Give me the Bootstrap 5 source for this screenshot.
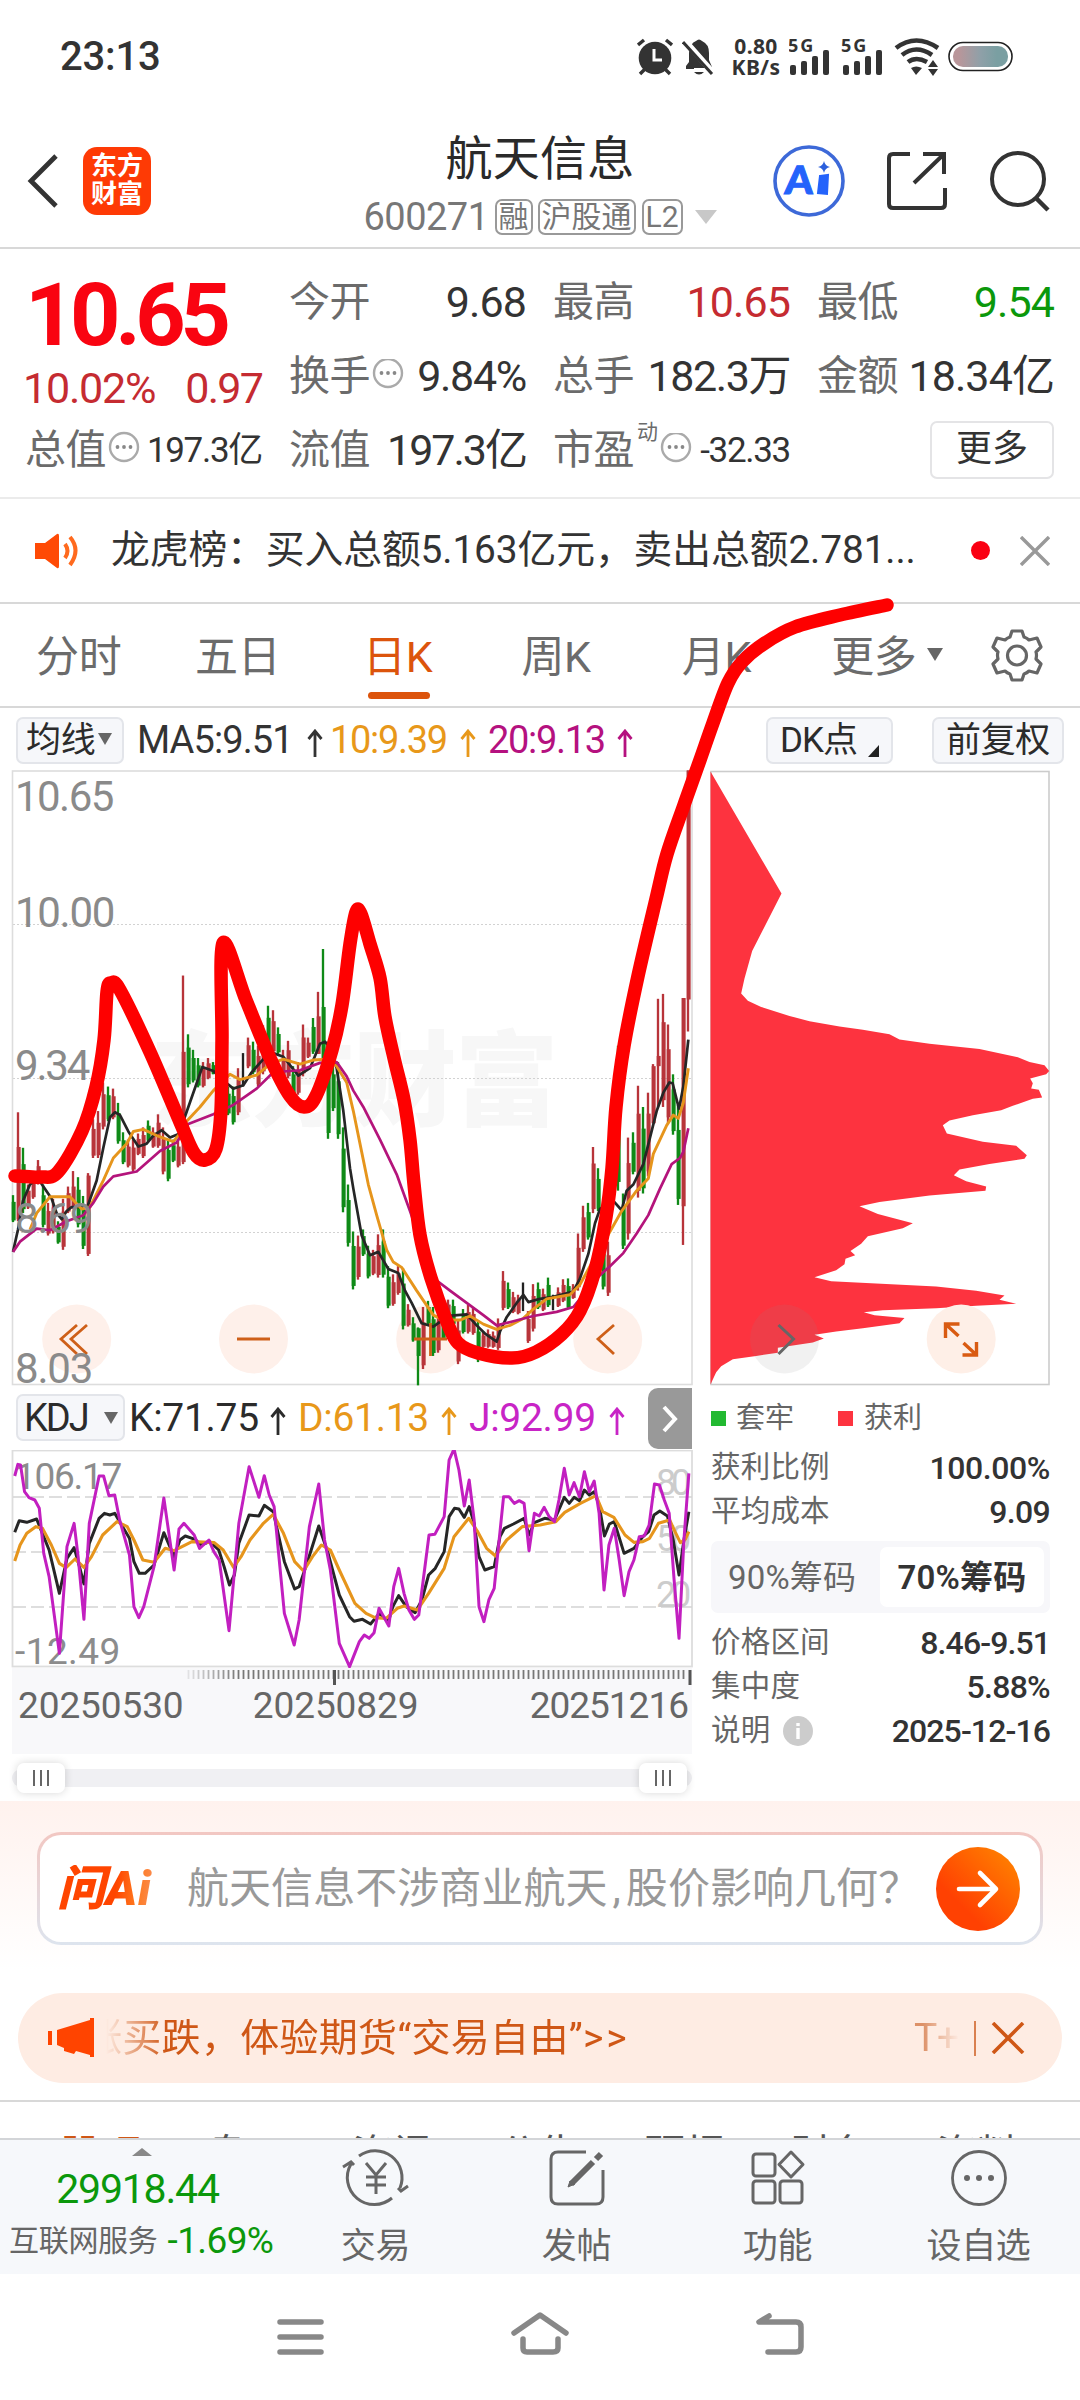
<!DOCTYPE html>
<html lang="zh-CN">
<head>
<meta charset="utf-8">
<meta name="viewport" content="width=device-width, initial-scale=1">
<title>航天信息 600271</title>
<link href="https://cdn.jsdelivr.net/npm/bootstrap@5.3.0/dist/css/bootstrap.min.css" rel="stylesheet">
<style>
  body { width:1080px; height:2400px; margin:0; overflow:hidden; background:#fff; color:#333; font-family:Roboto,"Noto Sans CJK SC",sans-serif; font-size:37px; line-height:1; letter-spacing:-.3px; position:relative; }
  svg { display:block; flex:none; }
  .nw { white-space:nowrap; }
  .statusbar { height:114px; padding:0 66px 0 60px; }
  .clock { font-size:40px; font-weight:500; letter-spacing:-.2px; }
  .netspeed { width:58px; margin-left:11px; font-family:"Noto Sans",sans-serif; font-size:21px; font-weight:700; line-height:21px; text-align:center; letter-spacing:.4px; }
  .appbar { height:135px; border-bottom:2px solid #d8d8d8; }
  .brand-tile { width:68px; height:68px; border-radius:14px; background:#fe3a05; color:#fff; font-size:26px; line-height:28px; font-weight:600; padding-top:5px; text-align:center; margin-left:24px; letter-spacing:0; }
  .stock-name { font-size:47px; color:#2a2a2a; height:63px; letter-spacing:.2px; }
  .stock-code { font-size:38px; color:#777; letter-spacing:-.5px; }
  .tagbox { border:2px solid #999; border-radius:7px; font-size:30px; height:36px; line-height:32px; padding:0 2px; margin-left:6px; color:#777; letter-spacing:0; }
  .quote { height:250px; padding:16px 25px 0 25px; border-bottom:2px solid #ebebeb; display:grid; grid-template-columns:repeat(4,237px); column-gap:27px; grid-template-rows:repeat(3,74px); }
  .lab { color:#6b6b6b; font-size:41px; letter-spacing:-.5px; }
  .num { font-size:43px; letter-spacing:-.9px; }
  .num-sm { font-size:35px; letter-spacing:-1.3px; }
  .bigprice { font-size:88px; font-weight:700; color:#f90411; letter-spacing:-5.4px; }
  .up { color:#c52b31; } .down { color:#0b980b; }
  .more-btn { width:124px; height:58px; border:2px solid #e4e4e6; border-radius:7px; font-size:36px; background:#fff; color:#333; padding:0 0 3px; }
  .notice { height:105px; border-bottom:2px solid #d8d8d8; padding:0 30px 0 34px; }
  .notice-text { font-size:38.8px; margin-left:31px; width:808px; letter-spacing:-.1px; }
  .periods { height:104px; border-bottom:2px solid #d8d8d8; color:#6b6b6b; font-size:43px; }
  .periods .pd { height:100%; position:relative; padding-top:5px; }
  .pd.on { color:#dc540c; }
  .pd.on::after { content:""; position:absolute; left:5px; right:2px; bottom:7px; height:7px; border-radius:4px; background:#dc540c; }
  .marow { height:62px; padding:2px 16px 0; font-size:38px; }
  .chip { height:47px; border:2px solid #e3e5ea; border-radius:7px; background:#f6f7fa; color:#2b2b2b; font-size:35px; white-space:nowrap; }
  .tri { width:0; height:0; border:7px solid transparent; border-top:12px solid #666; border-bottom:0; display:inline-block; }
  .arw { display:inline-block; margin-left:6px; }
  .orange { color:#e8981a; } .plum { color:#b5117f; } .pink { color:#c824c6; }
  .leftcol { width:700px; } .rightcol { width:380px; padding:0 30px 0 11px; }
  .kdjrow { height:63px; padding-left:16px; position:relative; font-size:39px; }
  .handle-open { width:44px; height:61px; background:#999; border-radius:10px 0 0 10px; margin-left:auto; margin-right:8px; }
  .dates { margin-left:12px; width:680px; height:86px; background:#f8f8fa; color:#666; }
  .dates .dlab { font-size:37px; letter-spacing:-.1px; padding:0 4px 0 6px; }
  .slider { height:18px; width:680px; margin:15px 0 0 12px; border-radius:9px; background:#f0f0f3; padding:0 5px; }
  .grip { width:48px; height:30px; border-radius:7px; background:#fff; box-shadow:0 0 8px rgba(0,0,0,.16); gap:5px; }
  .grip i { width:2px; height:16px; background:#666; }
  .legend { height:64px; margin-left:0; font-size:29px; color:#666; letter-spacing:0; }
  .sq { width:15px; height:15px; display:inline-block; }
  .kv { height:44px; font-size:29.5px; color:#666; letter-spacing:.2px; }
  .kv b { font-size:32px; font-weight:500; color:#333; letter-spacing:-.7px; }
  .seg { height:72px; margin:7px 0 8px; border-radius:7px; background:#f7f7fa; font-size:33px; color:#666; padding:6px; letter-spacing:.2px; }
  .seg .on { background:#fff; border-radius:7px; width:164px; height:60px; color:#333; font-weight:600; letter-spacing:.2px; }
  .asksec { height:192px; padding:31px 37px 0; background:linear-gradient(#fff2ee,#fff 88%); }
  .askbox { height:113px; border:3px solid transparent; border-radius:24px; background:linear-gradient(#fff,#fff) padding-box,linear-gradient(#f2c7c2,#dde4ee) border-box; padding:0 20px 0 17px; }
  .askq { font-size:42px; color:#999; margin-left:24px; letter-spacing:.05px; }
  .asklogo { font-weight:900; font-style:italic; font-size:48px; letter-spacing:.6px; width:106px; background:linear-gradient(95deg,#ff4500 55%,#ff7a20 75%,#f59a78); -webkit-background-clip:text; color:transparent; }
  .go { width:84px; height:84px; border-radius:50%; background:linear-gradient(45deg,#ff4102 30%,#ff8a00); }
  .promo { height:90px; margin:0 18px; border-radius:45px; background:#feece3; color:#cf5716; padding:0 37px 0 30px; }
  .promo-text { font-size:39px; margin-left:12px; width:800px; overflow:hidden; letter-spacing:.3px; -webkit-mask-image:linear-gradient(90deg,transparent 0,#000 60px,#000 790px); }
  .subtabs { margin-top:17px; height:38px; border-top:2px solid #d8d8d8; overflow:hidden; padding:33px 62px 0 60px; color:#555; font-size:41px; }
  .bottombar { height:136px; background:#f6f8fb; border-top:2px solid #d3d5d8; color:#666; font-size:35px; }
  .board { width:275px; padding:8px 0 0 9px; }
  .bitem { width:201px; }
  .navbar-sys { height:126px; position:relative; }
  .scribble { position:absolute; left:0; top:590px; pointer-events:none; z-index:5; }
</style>
</head>
<body>
<div class="statusbar d-flex align-items-center">
  <span class="clock">23:13</span>
  <div class="d-flex align-items-center ms-auto">
    <svg width="36" height="38" viewBox="0 0 36 38"><circle cx="18" cy="20" r="16.3" fill="#333"/><path d="M1 7l6-5M35 7l-6-5M3 36l6-6M33 36l-6-6" stroke="#333" stroke-width="3.4"/><path d="M17 11v11h8" fill="none" stroke="#fff" stroke-width="3"/></svg>
    <svg style="margin-left:9px" width="34" height="38" viewBox="0 0 34 38"><path d="M4 31V28L7 24V15Q8 5 14 3Q17 0 20 3Q27 6 27 15V22L30 29V31Z" fill="#333"/><path d="M12 33h10q-5 6-10 0M4 4L33 37" fill="#333" stroke="#fff" stroke-width="6"/><path d="M12 34h10q-5 5-10 0" fill="#333"/><path d="M1 4L30 36" stroke="#333" stroke-width="3"/></svg>
    <div class="netspeed">0.80<br>KB/s</div>
    <svg style="margin-left:4px" width="96" height="38" viewBox="0 0 96 38" fill="#333"><g id="sig"><text x="-1" y="14" font-family="Noto Sans" font-weight="700" font-size="18" textLength="25">5G</text><rect x="1" y="27" width="6" height="10" rx="2"/><rect x="12" y="23" width="6" height="14" rx="2"/><rect x="23" y="18" width="6" height="19" rx="2"/><rect x="34" y="12" width="6" height="25" rx="2"/></g><use href="#sig" x="53"/></svg>
    <svg style="margin-left:9px" width="46" height="38" viewBox="0 0 46 38"><g fill="none" stroke="#333" stroke-width="4.6"><path d="M2 10Q22-5 44 10M8 17Q22 6 38 17M14 24Q22 18 33 24"/></g><path d="M17 30q5-3 11 0l-6 7zM34 29l5-7 5 7zM34 31l5 7 5-7z" fill="#333"/></svg>
    <svg style="margin-left:8px" width="66" height="32" viewBox="0 0 66 32"><defs><linearGradient id="bat"><stop offset=".1" stop-color="#b9969a"/><stop offset=".5" stop-color="#8fa0a8"/><stop offset=".8" stop-color="#7a9fa2"/></linearGradient></defs><rect x="1" y="1.5" width="63" height="28" rx="14" fill="#fff" stroke="#222" stroke-width="1.6"/><rect x="5" y="5" width="55" height="21" rx="10" fill="url(#bat)"/></svg>
  </div>
</div>
<header class="appbar d-flex align-items-center position-relative">
  <svg style="margin-left:27px" width="32" height="56" viewBox="0 0 32 56"><path d="M29 3L4 28L29 53" fill="none" stroke="#333" stroke-width="4.8"/></svg>
  <div class="brand-tile">东方<br>财富</div>
  <div class="d-flex flex-column align-items-center" style="width:350px;margin-left:214px;margin-top:10px">
    <div class="stock-name nw">航天信息</div>
    <div class="d-flex align-items-center stock-code nw">600271<span class="tagbox" style="margin-left:6px">融</span><span class="tagbox" style="margin-left:5px">沪股通</span><span class="tagbox">L2</span><i class="tri" style="border-width:14px 11px 0;border-top-color:#c8c8c8;margin-left:12px"></i></div>
  </div>
  <svg style="margin-left:57px" width="74" height="74" viewBox="0 0 74 74"><circle cx="37" cy="37" r="34" fill="#fff" stroke="#3d69d8" stroke-width="3.6"/><text x="15" y="50" font-family="Lato,sans-serif" font-weight="900" font-size="39" fill="#2463fb" stroke="#2463fb" textLength="28" lengthAdjust="spacingAndGlyphs" transform="skewX(-3)">A</text><path d="M48 32l8-1-1 19-9-1z" fill="#2463fb" stroke="#2463fb" stroke-width="2"/><path d="M52 17q1 5 6 6q-5 1-6 6q-1-5-6-6q5-1 6-6" fill="#2b5fdc"/></svg>
  <svg style="margin-left:41px" width="60" height="60" viewBox="0 0 60 60"><path d="M23 3H6Q2 3 2 7V53Q2 57 6 57H54Q58 57 58 53V37M36 3H57V23M56 4L27 32" fill="none" stroke="#333" stroke-width="4"/></svg>
  <svg style="margin-left:43px" width="62" height="62" viewBox="0 0 62 62"><circle cx="28" cy="29" r="26" fill="none" stroke="#333" stroke-width="4"/><path d="M46 48L58 60" stroke="#333" stroke-width="4.5"/></svg>
</header>
<section class="quote">
  <div style="grid-row:span 2;padding-top:6px"><div class="bigprice">10.65</div><div class="up d-flex justify-content-between" style="font-size:43px;letter-spacing:-1.2px;margin:8px 0 0 -2px"><span>10.02%</span><span style="letter-spacing:-1.8px">0.97</span></div></div>
  <div class="d-flex align-items-center justify-content-between"><span class="lab">今开</span><span class="num">9.68</span></div>
  <div class="d-flex align-items-center justify-content-between"><span class="lab">最高</span><span class="num up">10.65</span></div>
  <div class="d-flex align-items-center justify-content-between"><span class="lab">最低</span><span class="num down">9.54</span></div>
  <div class="d-flex align-items-center"><span class="lab">换手</span><svg width="34" height="34" viewBox="0 0 34 34"><g id="dots"><circle cx="18" cy="14" r="14" fill="none" stroke="#aaa" stroke-width="2.4"/><circle cx="11.500" cy="14" r="1.900" fill="#888"/><circle cx="18" cy="14" r="1.900" fill="#888"/><circle cx="24.500" cy="14" r="1.900" fill="#888"/></g></svg><span class="num ms-auto" style="letter-spacing:-1.3px">9.84%</span></div>
  <div class="d-flex align-items-center justify-content-between nw"><span class="lab">总手</span><span class="num" style="letter-spacing:-1.4px">182.3万</span></div>
  <div class="d-flex align-items-center justify-content-between nw"><span class="lab">金额</span><span class="num">18.34亿</span></div>
  <div class="d-flex align-items-center nw"><span class="lab">总值</span><svg width="34" height="34" overflow="visible"><use href="#dots"/></svg><span class="num-sm ms-auto">197.3亿</span></div>
  <div class="d-flex align-items-center justify-content-between nw"><span class="lab">流值</span><span class="num" style="letter-spacing:-2px">197.3亿</span></div>
  <div class="d-flex align-items-center nw"><span class="lab">市盈</span><span class="lab align-self-start" style="font-size:21px;margin:9px 0 0 3px">动</span><svg width="34" height="34"><use href="#dots"/></svg><span class="num-sm ms-auto">-32.33</span></div>
  <div class="d-flex align-items-center justify-content-end"><button class="more-btn">更多</button></div>
</section>
<div class="notice d-flex align-items-center">
  <svg width="46" height="38" viewBox="0 0 46 38"><path d="M1 11H11L23 2Q25 1 25 4V34Q25 37 23 36L11 27H1z" fill="#ff4a05"/><path d="M31 12q5 7 0 14M36 5q11 13 0 28" fill="none" stroke="#ff6a1e" stroke-width="4"/></svg>
  <span class="notice-text nw">龙虎榜：买入总额5.163亿元，卖出总额2.781...</span>
  <span class="rounded-circle" style="width:19px;height:19px;background:#fa0012;margin-left:52px"></span>
  <svg class="ms-auto" width="30" height="30" viewBox="0 0 30 30"><path d="M1 1L29 29M29 1L1 29" stroke="#999" stroke-width="3.4"/></svg>
</div>
<nav class="periods d-flex align-items-center">
  <span class="pd d-flex align-items-center" style="width:159px;padding-left:36px">分时</span>
  <span class="pd d-flex align-items-center" style="width:204px;padding-left:36px">五日</span>
  <span class="pd on d-flex align-items-center">日K</span>
  <span class="pd d-flex align-items-center" style="margin-left:89px">周K</span>
  <span class="pd d-flex align-items-center" style="margin-left:91px">月K</span>
  <span class="pd d-flex align-items-center" style="margin-left:80px">更多<i class="tri" style="border-width:13px 8px 0;margin:-6px 0 0 10px"></i></span>
  <svg style="margin-left:48px" width="52" height="54" viewBox="0 0 52 54"><path d="M21 3H31L33 9Q36 10 38 12L46 10L50 19L45 24Q46 27 45 31L50 36L46 45L38 43Q36 45 33 46L31 52H21L19 46Q16 45 14 43L6 45L2 36L7 31Q6 27 7 24L2 19L6 10L14 12Q16 10 19 9z" fill="none" stroke="#666" stroke-width="3.200" stroke-linejoin="round"/><circle cx="26" cy="27.500" r="9.500" fill="none" stroke="#666" stroke-width="3.200"/></svg>
</nav>
<svg width="0" height="0" class="position-absolute"><symbol id="uparrow" viewBox="0 0 16 28"><path d="M8 28V2M1.500 10L8 2L14.500 10" fill="none" stroke="currentColor" stroke-width="2.800"/></symbol></svg>
<div class="marow d-flex align-items-center nw">
  <span class="chip d-flex align-items-center ps-2" style="width:108px">均线<i class="tri" style="margin:-3px 0 0 3px;border-width:12px 7px 0"></i></span>
  <span style="margin-left:13px;width:193px;letter-spacing:-.9px">MA5:9.51<svg class="arw" style="margin-left:14px" width="16" height="28"><use href="#uparrow"/></svg></span>
  <span class="orange" style="width:158px;letter-spacing:-1.300px">10:9.39<svg class="arw" style="margin-left:13px" width="16" height="28"><use href="#uparrow"/></svg></span>
  <span class="plum" style="letter-spacing:-1.300px">20:9.13<svg class="arw" style="margin-left:12px" width="16" height="28"><use href="#uparrow"/></svg></span>
  <span class="chip d-flex align-items-center ms-auto" style="width:127px;padding-left:12px;letter-spacing:-1px">DK点<svg style="margin:22px 0 0 11px" width="11" height="12"><path d="M11 0V12H0z" fill="#222"/></svg></span>
  <span class="chip d-flex align-items-center justify-content-center" style="width:132px;margin-left:39px">前复权</span>
</div>
<main class="d-flex" style="height:1031px">
  <div class="leftcol">
    <svg id="kline" width="700" height="617" viewBox="0 770 700 617"></svg>
    <div class="kdjrow d-flex align-items-center nw">
      <span class="chip d-flex align-items-center" style="width:109px;padding-left:6px;font-size:38px;letter-spacing:-2px;margin-top:-2px">KDJ<i class="tri" style="border-width:12px 7px 0;margin-left:16px"></i></span>
      <span style="margin-left:4px;width:169px;color:#2b2b2b">K:71.75<svg class="arw" style="margin-left:11px" width="16" height="28"><use href="#uparrow"/></svg></span>
      <span class="orange" style="width:171px">D:61.13<svg class="arw" style="margin-left:12px" width="16" height="28"><use href="#uparrow"/></svg></span>
      <span class="pink">J:92.99<svg class="arw" style="margin-left:13px" width="16" height="28"><use href="#uparrow"/></svg></span>
      <span class="handle-open d-flex align-items-center justify-content-center"><svg width="18" height="28" viewBox="0 0 18 28"><path d="M3 2L14 14L3 26" fill="none" stroke="#fff" stroke-width="4"/></svg></span>
    </div>
    <svg id="kdj" width="700" height="218" viewBox="0 1450 700 218"></svg>
    <div class="dates">
      <svg id="ticks" width="680" height="17"></svg>
      <div class="dlab d-flex justify-content-between" style="margin-top:2px"><span>20250530</span><span style="margin-left:-42px">20250829</span><span style="letter-spacing:-1px">20251216</span></div>
    </div>
    <div class="slider d-flex align-items-center justify-content-between"><span class="grip d-flex align-items-center justify-content-center"><i></i><i></i><i></i></span><span class="grip d-flex align-items-center justify-content-center"><i></i><i></i><i></i></span></div>
  </div>
  <div class="rightcol">
    <svg width="340" height="616" viewBox="690 770 340 616" style="margin-left:-1px"><g transform="translate(-20.500 0)">
      <rect x="711.500" y="771.500" width="338" height="613" fill="#fff" stroke="#ccc" stroke-width="1.600"/>
      <path transform="translate(690 760) scale(.33333 .4082)" fill="#fd333f" d="M63 28L276 327L188 468L165 535L155 572L175 590L215 605L300 627L360 640L450 653L520 661L600 672L630 685L720 695L870 708L985 728L1020 740L1065 748L1079 762L1070 770L1022 780L1030 792L1025 805L1048 808L1058 827L1030 830L970 847L935 858L850 870L780 883L760 895L772 915L880 935L980 945L1012 968L1005 977L900 990L810 1003L793 1017L830 1032L890 1045L888 1055L720 1067L570 1083L510 1093L565 1112L670 1135L640 1147L535 1167L515 1185L483 1203L497 1213L468 1222L465 1235L440 1250L375 1267L425 1277L740 1290L860 1300L945 1312L930 1322L980 1332L860 1337L740 1343L580 1348L523 1353L555 1360L645 1367L630 1380L520 1392L440 1400L375 1408L403 1417L370 1427L265 1440L265 1452L200 1460L130 1468L95 1485L80 1500L63 1530Z"/>
      <circle cx="785" cy="1339" r="34.500" fill="#888" opacity=".12"/><path d="M779 1325l15 14-15 15" fill="none" stroke="#666" stroke-width="3"/>
      <circle cx="961.700" cy="1339" r="34.500" fill="#feefe7"/><path d="M946 1338v-14h14M946 1324l13 12M977 1342v13h-14M977 1355l-13-12" fill="none" stroke="#d95b12" stroke-width="3.400"/>
    </g></svg>
    <div class="legend d-flex align-items-center"><i class="sq" style="background:#22b931"></i><span style="margin-left:10px;width:102px">套牢</span><i class="sq" style="background:#fd333f"></i><span style="margin-left:11px">获利</span></div>
    <div class="kv d-flex align-items-center justify-content-between" style="margin-top:-4px"><span>获利比例</span><b style="letter-spacing:-.4px">100.00%</b></div>
    <div class="kv d-flex align-items-center justify-content-between"><span>平均成本</span><b>9.09</b></div>
    <div class="seg d-flex align-items-center justify-content-between nw"><span style="padding-left:11px">90%筹码</span><span class="on d-flex align-items-center justify-content-center">70%筹码</span></div>
    <div class="kv d-flex align-items-center justify-content-between"><span>价格区间</span><b style="letter-spacing:-.9px">8.46-9.51</b></div>
    <div class="kv d-flex align-items-center justify-content-between"><span>集中度</span><b>5.88%</b></div>
    <div class="kv d-flex align-items-center"><span>说明</span><svg style="margin-left:13px" width="30" height="30"><circle cx="15" cy="15" r="15" fill="#ccc"/><path d="M15 12v11M15 7v3" stroke="#fff" stroke-width="3.400"/></svg><b class="ms-auto" style="letter-spacing:-.9px">2025-12-16</b></div>
  </div>
</main>
<section class="asksec">
  <div class="askbox d-flex align-items-center nw">
    <span class="asklogo">问Ai</span><span class="askq">航天信息不涉商业航天<span style="margin:0 5px">,</span>股价影响几何？</span>
    <span class="go ms-auto d-flex align-items-center justify-content-center"><svg width="44" height="40" viewBox="0 0 44 40"><path d="M3 20H40M24 4L40 20L24 36" fill="none" stroke="#fff" stroke-width="4.600" stroke-linecap="round" stroke-linejoin="round"/></svg></span>
  </div>
</section>
<div class="promo d-flex align-items-center nw">
  <svg width="46" height="40" viewBox="0 0 46 40"><path d="M0 13h4v14H0zM9 12L42 2V0h4v39h-4v-2L28 33L26 36L16 33V30L9 27z" fill="#ff4400"/></svg>
  <div class="promo-text d-flex"><span style="margin-left:-23px">涨买跌，体验期货“交易自由”<span style="letter-spacing:3px">&gt;&gt;</span></span></div>
  <span style="font-size:39px;color:#dd9168;margin-left:8px;-webkit-mask-image:linear-gradient(90deg,#000 20%,transparent)">T+</span>
  <span class="ms-auto" style="width:2px;height:35px;background:#d98050"></span>
  <svg style="margin-left:15px" width="34" height="32" viewBox="0 0 34 32"><path d="M2 1L32 31M32 1L2 31" stroke="#cf5716" stroke-width="3.600"/></svg>
</div>
<div class="subtabs d-flex justify-content-between nw"><span style="color:#cf5716">股吧</span><span>盘口</span><span>资讯</span><span>公告</span><span>研报</span><span>财务</span><span>资料</span></div>
<footer class="bottombar d-flex nw">
  <div class="board"><i class="d-block mx-auto" style="width:0;border:10px solid transparent;border-top:0;border-bottom:8px solid #888"></i><div class="down text-center" style="font-size:41px;letter-spacing:-1.200px;margin-top:13px;margin-right:9px">29918.44</div><div class="d-flex align-items-center" style="font-size:30px;margin-top:12px">互联网服务<span class="down" style="font-size:37px;letter-spacing:-.6px;margin-left:10px">-1.69%</span></div></div>
  <div class="bitem d-flex flex-column align-items-center"><svg style="margin-top:8px" width="68" height="60" viewBox="0 0 68 60" fill="none" stroke="#666" stroke-width="3"><path d="M17 8A27 27 0 0 1 58 40M50 50A27 27 0 0 1 9 16M1 19L9 14L12 17M66 38L59 43L56 40M24 15l10 12l10-12M34 27v19M24 29h20M24 37h20"/></svg><span style="margin-top:21px">交易</span></div>
  <div class="bitem d-flex flex-column align-items-center"><svg style="margin-top:8px" width="60" height="60" viewBox="0 0 60 60" fill="none" stroke="#666" stroke-width="3"><path d="M39 4H11Q4 4 4 11V49Q4 56 11 56H49Q56 56 56 49V22"/><path d="M24 36L46 14M49 11L54 6" stroke-width="6"/><path d="M21 39l2-6 5 3z" fill="#666" stroke-width="1"/></svg><span style="margin-top:21px">发帖</span></div>
  <div class="bitem d-flex flex-column align-items-center"><svg style="margin-top:8px" width="56" height="60" viewBox="0 0 56 60" fill="none" stroke="#666" stroke-width="3"><rect x="3" y="6" width="22" height="22" rx="3"/><rect x="3" y="33" width="22" height="22" rx="3"/><rect x="30" y="33" width="22" height="22" rx="3"/><path d="M41 4L53 16.500L41 29L29 16.500z" stroke-linejoin="round"/></svg><span style="margin-top:21px">功能</span></div>
  <div class="bitem d-flex flex-column align-items-center"><svg style="margin-top:8px" width="60" height="60" viewBox="0 0 60 60"><circle cx="30" cy="30" r="26.500" fill="none" stroke="#666" stroke-width="2.800"/><g fill="#666"><circle cx="18" cy="30" r="3"/><circle cx="30" cy="30" r="3"/><circle cx="42" cy="30" r="3"/></g></svg><span style="margin-top:21px">设自选</span></div>
</footer>
<div class="navbar-sys">
  <svg width="1080" height="126" viewBox="0 2274 1080 126" fill="none" stroke="#888" stroke-width="5.500" stroke-linecap="round" stroke-linejoin="round"><path d="M280 2322h41M280 2337h41M280 2352h41M514 2333L540 2315L566 2333M523 2339V2348Q523 2352 527 2352H553Q558 2352 558 2348V2339M769 2316L759 2322H796Q801 2322 801 2327V2347Q801 2352 796 2352H768"/></svg>
</div>

<svg class="scribble" width="1080" height="800" viewBox="0 590 1080 800"><path id="stroke" fill="none" stroke="#fe0000" stroke-width="13.500" stroke-linecap="round" stroke-linejoin="round"/></svg>

<script src="https://cdn.jsdelivr.net/npm/bootstrap@5.3.0/dist/js/bootstrap.bundle.min.js"></script>
<script>
// chart traces are stored as "x,y x,y" in chart units
const pts = s => s.trim().split(/\s+/).map(p => p.split(',').map(Number));
// smooth path through a list of points
function smooth(p, t = 1/6) {
  let d = `M${p[0][0]} ${p[0][1]}`;
  for (let i = 0; i < p.length - 1; i++) {
    const a = p[i-1] || p[i], b = p[i], c = p[i+1], e = p[i+2] || c;
    d += `C${b[0]+(c[0]-a[0])*t} ${b[1]+(c[1]-a[1])*t} ${c[0]-(e[0]-b[0])*t} ${c[1]-(e[1]-b[1])*t} ${c[0]} ${c[1]}`;
  }
  return d;
}
const poly = (s, col, w) => `<polyline points="${s.trim()}" fill="none" stroke="${col}" stroke-width="${w}" stroke-linejoin="round" vector-effect="non-scaling-stroke"/>`;

// candles: slot, high, low, direction, optional body top/bottom
const candles = `0 1066 1132 g,1 863 1130 r 948 1125,2 950 1110 g,3 1040 1100 r,4 1010 1075 r,5 980 1040 r,6 1040 1145 g,7 1085 1165 r,8 1075 1160 r,9 1130 1185 g,10 1075 1200 r,11 1045 1110 r,12 1007 1100 r 1045 1100,13 1022 1145 g,14 1068 1198 g,15 1012 1215 r 1018 1210,16 880 975 r,17 860 975 r,18 790 905 r,19 800 885 g,20 805 880 r,21 840 940 g,22 912 990 g,23 930 998 r,24 930 1008 r,25 915 968 r,26 900 975 r,27 883 935 g,28 900 950 r,29 868 950 r,30 900 1015 r,31 930 1032 g,32 930 985 g,33 930 998 r,34 528 990 r 715 985,35 672 802 g,36 710 790 g,37 730 802 g,38 740 802 r,39 730 782 r,40 740 770 g,43 800 870 g,44 800 893 g,45 755 870 r,46 718 800 k,47 680 755 r,48 690 770 g,49 700 800 r,50 650 770 r,51 602 720 g,52 613 720 r,53 655 720 g,54 710 810 r,55 688 780 r,56 750 830 g,57 740 820 r,58 648 775 r,59 680 730 r,60 632 720 g,61 568 720 r 628 720,62 463 740 g 605 735,63 690 928 g,64 740 860 g,65 740 928 g,66 900 1108 g,67 1040 1192 g,68 1155 1297 g,69 1165 1273 r,70 1150 1215 g,71 1190 1270 g,72 1200 1262 r,73 1162 1268 r,74 1150 1268 g,75 1240 1343 g,76 1260 1337 r,77 1240 1310 r,78 1245 1395 g,79 1333 1388 r,80 1365 1425 g,81 1390 1532 g 1392 1460,82 1340 1492 r,83 1325 1385 g,84 1340 1460 g,85 1350 1452 r,86 1350 1420 g,87 1322 1370 r,88 1322 1385 g,89 1370 1480 r,90 1345 1405 g,91 1335 1405 r,92 1340 1408 r,93 1375 1475 g,94 1400 1440 r,95 1395 1440 r,96 1400 1440 r,97 1368 1445 r,98 1252 1348 r,99 1280 1345 g,100 1303 1355 r,101 1310 1358 r,102 1280 1350 k,103 1350 1428 r,104 1284 1400 r,105 1280 1345 g,106 1295 1350 r,107 1268 1340 g,108 1310 1348 k,109 1292 1340 r,110 1272 1328 r,111 1270 1345 g,112 1284 1320 r,113 1160 1300 r,114 1092 1205 r,115 1085 1175 g,116 948 1110 r,117 1000 1105 g,118 1180 1297 g,119 1180 1313 r,121 700 1055 g,122 1062 1198 g,123 925 1175 r,124 912 1015 g,125 798 1072 r,126 850 1062 g,127 815 1020 r,128 745 890 r 750 890,129 585 850 r 725 750,130 573 850 r,131 648 890 r,132 770 918 g,133 845 1090 g,134 583 1188 r 583 1093,135 26 665 r 26 587`;
const tone = { r: '#b8343a', g: '#0f8a17', k: '#222' };
let body = '';
candles.split(',').forEach(row => {
  const [k, hi, lo, c, bt, bb] = row.split(' ');
  const x = 39 + k * 15, h = lo - hi;
  const y1 = bt ? +bt : +hi + h * .25, y2 = bb ? +bb : +hi + h * .94;
  body += `<path d="M${x-3.5} ${hi}h7V${lo}h-7z" fill="${tone[c]}"/>`;
  if (c !== 'k') body += `<path d="M${x-4} ${y1}h12V${y2}h-12z" fill="${tone[c]}"/>`;
});
const ma5 = '39,1205 54,1150 69,1080 90,1040 114,1025 130,1045 155,1075 170,1110 185,1125 200,1105 215,1095 240,1095 262,1095 290,1030 310,950 330,875 345,863 360,870 385,910 415,947 440,940 460,920 485,907 510,925 540,915 550,885 580,815 607,752 640,762 670,785 700,805 730,797 755,765 780,742 810,715 850,727 895,773 930,755 960,695 975,690 990,705 1010,755 1030,860 1050,1000 1060,1050 1085,1165 1110,1213 1135,1205 1165,1247 1195,1257 1215,1300 1235,1330 1265,1380 1300,1388 1345,1362 1400,1358 1430,1385 1455,1405 1490,1425 1500,1400 1520,1365 1550,1330 1570,1310 1585,1328 1620,1320 1660,1315 1720,1302 1740,1270 1765,1210 1785,1135 1800,1100 1840,1080 1865,1103 1880,1055 1900,1040 1930,990 1950,925 1970,860 1990,815 2008,790 2018,792 2037,855 2050,800 2065,685';
const ma10 = '90,1150 110,1110 150,1070 210,1070 245,1100 270,1095 310,1030 340,975 380,940 400,910 430,905 470,920 520,935 545,910 560,885 600,850 640,810 690,770 720,783 770,772 810,745 850,733 900,745 940,735 980,733 1010,750 1040,790 1060,860 1085,960 1105,1040 1130,1115 1160,1200 1180,1230 1205,1243 1250,1300 1300,1360 1330,1372 1380,1372 1410,1362 1450,1382 1490,1395 1530,1385 1570,1368 1600,1345 1640,1320 1710,1310 1740,1285 1770,1240 1820,1170 1865,1105 1910,1055 1945,1025 1960,965 2000,895 2020,870 2035,878 2050,840 2065,755';
const ma20 = '39,1205 60,1180 110,1148 150,1152 200,1130 250,1115 280,1085 310,1045 340,1020 410,1008 480,958 530,937 565,892 640,868 700,845 770,805 820,765 900,760 960,742 1010,740 1040,775 1060,810 1090,850 1140,930 1190,1015 1230,1105 1270,1200 1310,1275 1350,1300 1400,1330 1450,1360 1490,1385 1540,1375 1600,1362 1670,1352 1720,1340 1760,1300 1800,1262 1830,1240 1870,1208 1910,1160 1945,1115 1980,1050 2015,990 2040,975 2050,960 2065,902';
const labels = [['10.65',811,95],['10.00',927,96],['9.34',1080,71],['8.69',1233,74],['8.03',1383,74]];
const grid = [924.5,1078.5,1232.5].map(y => `<path d="M13 ${y}H692" stroke="#d2d2d2" stroke-width="1" stroke-dasharray="2 2"/>`).join('');
document.getElementById('kline').innerHTML =
  `<text x="150" y="1118" font-size="103" font-weight="900" fill="#f7f7f7" textLength="408">东方财富</text>
  ${grid}<rect x="12.500" y="771" width="679.500" height="613.500" fill="none" stroke="#ddd" stroke-width="1.600"/>
  <g fill="#fef0ea"><circle cx="76.700" cy="1339" r="34.500"/><circle cx="253.500" cy="1339" r="34.500"/><circle cx="430.700" cy="1339" r="34.500"/><circle cx="607.700" cy="1339" r="34.500"/></g>
  <g transform="translate(0 760) scale(.33333 .4082)">${body}${poly(ma5,'#262626',2.7)}${poly(ma10,'#e6951c',2.9)}${poly(ma20,'#b4147b',2.7)}</g>
  <g fill="none" stroke="#ce5f18" stroke-width="2.800"><path d="M77 1325L61 1339L77 1354M87 1325L71 1339L87 1354M237 1339H270M414 1339H447M430.500 1323V1356M614 1325L598 1339L614 1354"/></g>
  <g font-size="42" fill="#8a8a8a">${labels.map(l => `<text x="15" y="${l[1]}" textLength="${l[2]+4}" lengthAdjust="spacing">${l[0]}</text>`).join('')}</g>`;

const J = '33,288 40,253 46,255 55,335 65,353 78,360 88,385 98,520 110,590 133,820 150,500 166,430 175,530 188,718 200,430 222,288 232,288 244,347 257,345 268,420 290,525 300,680 311,713 322,680 345,560 367,354 390,570 401,447 412,430 435,465 447,505 468,480 479,515 491,540 513,752 535,430 558,260 580,352 592,287 603,345 614,380 637,700 659,795 670,720 693,440 714,312 727,480 740,570 760,790 783,860 805,785 816,765 827,775 838,758 849,685 871,738 882,620 893,565 905,640 916,690 928,718 938,705 961,465 974,463 995,410 1006,240 1017,207 1028,270 1040,378 1051,300 1062,420 1073,680 1084,725 1095,660 1107,625 1128,350 1140,350 1152,370 1163,362 1174,370 1185,512 1197,400 1208,408 1219,382 1230,410 1242,425 1252,360 1264,265 1275,345 1286,308 1298,350 1309,275 1320,335 1331,303 1342,400 1353,630 1364,495 1376,445 1387,540 1398,647 1409,575 1420,540 1432,470 1443,468 1454,435 1466,312 1477,315 1488,360 1499,400 1510,600 1521,775 1532,480 1543,280';
const K = '33,457 43,422 60,427 82,417 95,460 110,510 133,640 150,535 166,503 178,560 188,612 200,490 222,415 234,400 246,405 257,400 270,430 290,475 300,545 312,580 325,580 345,555 367,458 390,530 403,480 415,468 437,478 450,495 470,485 490,510 502,560 514,615 525,585 535,490 558,405 580,408 592,376 612,395 637,545 660,627 670,620 690,540 714,438 735,520 760,645 783,710 793,724 812,718 830,732 850,700 870,725 880,680 893,647 910,680 930,698 945,660 960,585 975,565 995,515 1006,410 1018,385 1028,387 1040,412 1051,380 1062,430 1073,530 1086,570 1107,560 1120,470 1130,445 1150,432 1174,415 1185,465 1197,428 1220,415 1242,420 1264,352 1275,370 1286,352 1298,362 1309,330 1320,345 1331,335 1342,375 1354,468 1365,432 1376,425 1398,520 1420,505 1440,470 1453,455 1465,405 1478,393 1495,408 1508,480 1521,585 1532,480 1543,395';
const D = '33,543 45,495 60,460 80,440 95,445 115,495 133,550 148,563 168,537 188,562 205,530 230,465 262,425 285,440 300,480 320,540 345,547 370,505 390,512 430,485 480,488 500,510 523,562 540,530 560,480 590,430 612,403 635,460 660,545 680,573 700,530 720,495 740,510 760,570 795,670 820,700 840,713 865,715 890,685 905,678 935,690 960,640 995,565 1017,470 1050,415 1070,455 1090,505 1110,528 1135,480 1170,440 1210,435 1245,425 1265,397 1300,370 1335,347 1350,395 1375,412 1400,465 1420,487 1440,485 1455,475 1475,430 1500,420 1512,455 1524,488 1535,478 1543,455';
document.getElementById('kdj').innerHTML =
  `<rect x="12.500" y="1450.500" width="679.500" height="216" fill="none" stroke="#ddd" stroke-width="1.800"/>
  ${[1497,1552,1607].map(y => `<path d="M13 ${y}H692" stroke="#d4d4d4" stroke-width="1.500" stroke-dasharray="13 5"/>`).join('')}
  <g font-size="36" fill="#ccc"><text x="656" y="1495" textLength="35">80</text><text x="656" y="1551" textLength="35">50</text><text x="656" y="1607" textLength="35">20</text></g>
  <g font-size="37" fill="#8c8c8c"><text x="15" y="1489" textLength="107">106.17</text><text x="15" y="1664" textLength="105">-12.49</text></g>
  <g transform="translate(0 1380) scale(.44643 .33333)">${poly(K,'#262626',3)}${poly(D,'#e6951c',3.1)}${poly(J,'#c21fc0',3)}</g>`;

let t = '';
for (let x = 176; x < 676; x += 5) t += `<path d="M${x+.5} 2v9" stroke="#777" stroke-width="1.800" opacity="${Math.min(1,(x-166)/60)}"/>`;
document.getElementById('ticks').innerHTML = t + '<path d="M322.500 2v15M678 2v15" stroke="#555" stroke-width="3"/>';

// hand-drawn trend line over the chart
document.getElementById('stroke').setAttribute('d', smooth(pts(`15,1176 40,1177 58,1172 82,1131 96,1087 104,1040 107,992 111,983 120,990 150,1052 180,1122 194,1153 205,1160 216,1149 221,1110 222,1040 223,943 246,1000 270,1058 290,1096 304,1107 316,1096 332,1050 342,1005 350,944 356,912 361,914 370,944 380,978 385,1017 394,1058 404,1100 410,1140 414,1184 420,1235 431,1278 447,1322 458,1343 478,1353 512,1358 536,1352 562,1334 580,1311 595,1270 606,1217 612,1168 616,1107 624,1046 638,976 656,899 667,854 684,805 700,760 713,723 728,683 742,662 765,643 795,627 840,615 887,605`)));
</script>
</body>
</html>
